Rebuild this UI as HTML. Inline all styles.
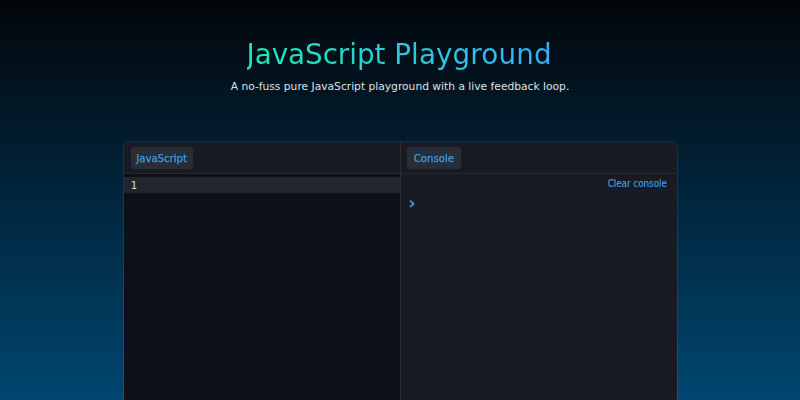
<!DOCTYPE html>
<html lang="en">
<head>
<meta charset="utf-8">
<title>JavaScript Playground</title>
<style>
  html, body { margin: 0; padding: 0; }
  body {
    width: 800px; height: 400px; overflow: hidden; position: relative;
    background: linear-gradient(180deg, #02060a 0px, #004670 400px);
    font-family: "Liberation Sans", sans-serif;
    color: #d6dde4;
  }
  h1 {
    position: absolute; left: -0.9px; top: 35px; width: 800px; margin: 0;
    text-align: center; font-weight: normal; font-size: 27.8px; line-height: 40px;
    font-family: "DejaVu Sans", "Liberation Sans", sans-serif; letter-spacing: -0.05px;
  }
  h1 span {
    background: linear-gradient(90deg, #1de9b6 0%, #38aef8 100%);
    -webkit-background-clip: text; background-clip: text;
    color: transparent; -webkit-text-fill-color: transparent;
    display: inline-block;
  }
  h1 i { font-style: normal; letter-spacing: 0.12px; }
  .sub {
    position: absolute; left: 0; top: 79px; width: 800px; margin: 0;
    text-align: center; font-size: 10.7px; line-height: 16px; font-family: "DejaVu Sans", "Liberation Sans", sans-serif;
    color: #dce2e8;
  }
  .panel {
    position: absolute; left: 123px; top: 141px; width: 553px; height: 300px;
    border: 1px solid rgba(255,255,255,0.09); border-radius: 5px; overflow: hidden;
    background: #181b23; background-clip: padding-box; box-sizing: content-box;
  }
  .col { position: absolute; top: 0; bottom: 0; }
  .editor { left: 0; width: 276px; background: #0d1018; }
  .console { left: 277px; right: 0; background: #181b23; }
  .vdiv { position: absolute; left: 276px; top: 0; bottom: 0; width: 1px; background: #282d35; }
  .head { position: absolute; left: 0; right: 0; top: 0; height: 31px; background: #181b23; border-bottom: 1px solid #232832; }
  .tab {
    position: absolute; top: 5px; height: 22px; line-height: 22px; border-radius: 3px;
    background: #282e37; color: #3f9fea; font-size: 11px; -webkit-text-stroke: 0.25px #3f9fea; text-align: center;
    font-family: "DejaVu Sans", "Liberation Sans", sans-serif;
  }
  .tab span { display: inline-block; transform: scaleX(0.92); transform-origin: 50% 50%; white-space: nowrap; position: relative; top: 1px; }
  .line { position: absolute; left: 0; right: 0; top: 35px; height: 16px; background: #22242e; }
  .ln { position: absolute; left: 6.5px; top: 1px; font: 11px/16px "DejaVu Sans Mono", "Liberation Mono", monospace; color: #d5d8dc; }
  .clear { position: absolute; right: 10px; top: 36px; font-size: 10.2px; line-height: 12px; color: #3f9fea; -webkit-text-stroke: 0.2px #3f9fea; font-family: "DejaVu Sans", "Liberation Sans", sans-serif; transform: scaleX(0.86); transform-origin: 100% 50%; white-space: nowrap; }
  .prompt { position: absolute; left: 7.5px; top: 51.5px; font-size: 17px; line-height: 18px; font-weight: bold; color: #3a9ff0; font-family: "DejaVu Sans", sans-serif; }
</style>
</head>
<body>
  <h1><span>JavaScript <i>Playground</i></span></h1>
  <p class="sub">A no-fuss pure JavaScript playground with a live feedback loop.</p>
  <div class="panel">
    <div class="col editor">
      <div class="head"><div class="tab" style="left:7px;width:62px;"><span>JavaScript</span></div></div>
      <div class="line"><span class="ln">1</span></div>
    </div>
    <div class="vdiv"></div>
    <div class="col console">
      <div class="head"><div class="tab" style="left:6px;width:54px;"><span>Console</span></div></div>
      <div class="clear">Clear console</div>
      <div class="prompt">›</div>
    </div>
  </div>
</body>
</html>
